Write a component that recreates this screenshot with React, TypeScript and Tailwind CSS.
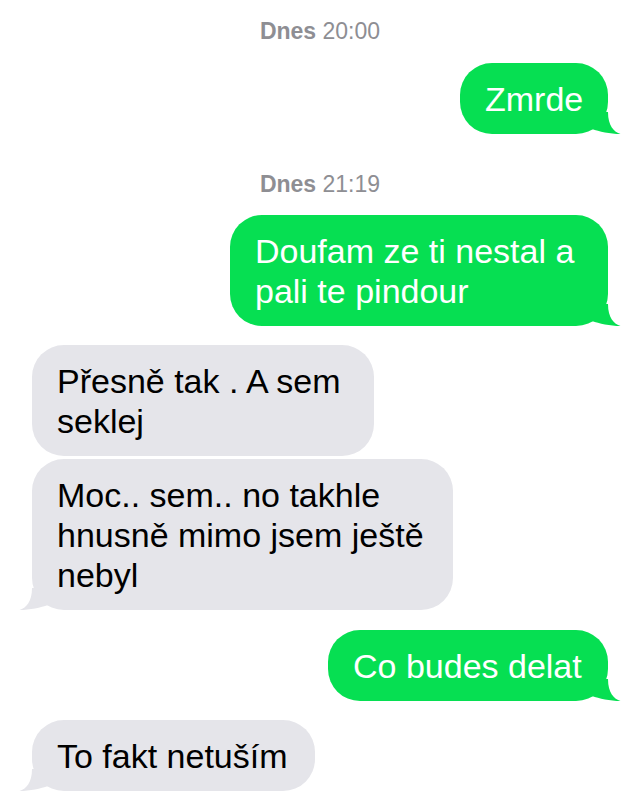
import React from "react";

const FONT = { fontFamily: '"Liberation Sans", Arial, sans-serif' };

// bubble tail, drawn with (0,0) at the bubble's bottom-right corner
function Tail({ side, color }: { side: "left" | "right"; color: string }) {
    return (
        <svg
            width="34"
            height="24"
            viewBox="-20 -24 34 24"
            className={
                side === "right"
                    ? "absolute bottom-0 right-[-14px]"
                    : "absolute bottom-0 left-[-14px] -scale-x-100"
            }
        >
            <path
                d="M-16 -5 C-9 -2.5 2 0 12.5 0 C6 -2 0 -8 0 -22 L-16 -22 Z"
                fill={color}
            />
        </svg>
    );
}

function Stamp({ day, time, className }: { day: string; time: string; className?: string }) {
    return (
        <div className={`text-center text-[23px] leading-[24px] text-[#8e8e93] ${className ?? ""}`}>
            <span className="font-bold">{day}</span> {time}
        </div>
    );
}

function Sent({ width, lines, className, tail = true }: { width: string; lines: string[]; className?: string; tail?: boolean }) {
    return (
        <div className={`flex justify-end pr-[32px] ${className ?? ""}`}>
            <div className={`relative ${width} rounded-[32px] bg-[#06df52] pl-[25px] pt-[16px] pb-[15px] text-[34px] leading-[40px] text-white whitespace-nowrap`}>
                {lines.map((l) => (
                    <div key={l} className="relative">{l}</div>
                ))}
                {tail && <Tail side="right" color="#06df52" />}
            </div>
        </div>
    );
}

function Received({ width, lines, className, tail = true }: { width: string; lines: string[]; className?: string; tail?: boolean }) {
    return (
        <div className={`flex justify-start pl-[32px] ${className ?? ""}`}>
            <div className={`relative ${width} rounded-[32px] bg-[#e5e5ea] pl-[25px] pt-[16px] pb-[15px] text-[34px] leading-[40px] text-black whitespace-nowrap`}>
                {lines.map((l) => (
                    <div key={l} className="relative">{l}</div>
                ))}
                {tail && <Tail side="left" color="#e5e5ea" />}
            </div>
        </div>
    );
}

export default function App() {
    return (
        <div className="h-[804px] w-[640px] overflow-hidden bg-white pt-[19px]" style={FONT}>
            <Stamp day="Dnes" time="20:00" />
            <Sent width="w-[148px]" lines={["Zmrde"]} className="mt-[20px]" />

            <Stamp day="Dnes" time="21:19" className="mt-[38px]" />
            <Sent width="w-[378px]" lines={["Doufam ze ti nestal a", "pali te pindour"]} className="mt-[19px]" />

            <Received width="w-[342px]" lines={["Přesně tak . A sem", "seklej"]} className="mt-[19px]" tail={false} />
            <Received width="w-[421px]" lines={["Moc.. sem.. no takhle", "hnusně mimo jsem ještě", "nebyl"]} className="mt-[3px]" />

            <Sent width="w-[280px]" lines={["Co budes delat"]} className="mt-[20px]" />
            <Received width="w-[283px]" lines={["To fakt netuším"]} className="mt-[19px]" />
        </div>
    );
}
